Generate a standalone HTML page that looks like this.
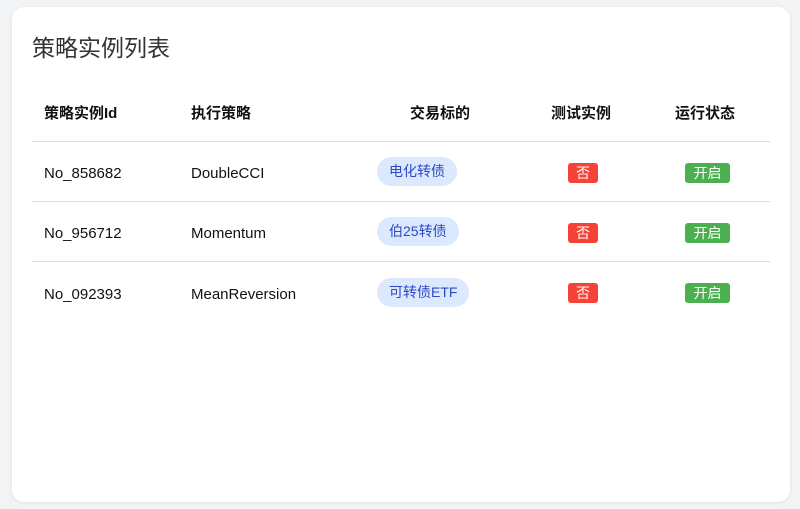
<html><head><style>
body{margin:0;width:800px;height:509px;background:#f2f3f5;font-family:"Liberation Sans","Noto Sans CJK SC",sans-serif;position:relative;overflow:hidden}
.card{position:absolute;left:12px;top:7px;width:778px;height:495px;background:#fff;border-radius:12px;box-shadow:0 1px 4px rgba(0,0,0,0.08)}
.t{position:absolute;white-space:nowrap}
.title{left:32px;top:29px;font-size:23px;color:#333}
.h{font-size:15px;font-weight:bold;color:#111;top:102px}
.line{position:absolute;left:32px;width:738px;height:1px;background:#ddd}
.c{font-size:15px;color:#111}
.pill{position:absolute;left:377px;height:29px;line-height:29px;padding:0 12px;border-radius:15px;background:#dce8fd;color:#2c48c2;font-size:14px}
.no{position:absolute;left:568px;width:30px;height:20px;line-height:20px;text-align:center;background:#f44336;color:#fff;border-radius:3px;font-size:14px}
.on{position:absolute;left:685px;width:45px;height:20px;line-height:20px;text-align:center;background:#4caf50;color:#fff;border-radius:3px;font-size:14px}
</style></head><body>
<div class="card"></div>
<div class="t title">策略实例列表</div>
<div class="t h" style="left:44px">策略实例Id</div>
<div class="t h" style="left:191px">执行策略</div>
<div class="t h" style="left:410px">交易标的</div>
<div class="t h" style="left:551px">测试实例</div>
<div class="t h" style="left:675px">运行状态</div>
<div class="line" style="top:141px"></div>
<div class="line" style="top:201px"></div>
<div class="line" style="top:261px"></div>
<div class="t c" style="left:44px;top:165px">No_858682</div>
<div class="t c" style="left:191px;top:165px">DoubleCCI</div>
<div class="pill" style="top:157px">电化转债</div>
<div class="no" style="top:163px">否</div>
<div class="on" style="top:163px">开启</div>
<div class="t c" style="left:44px;top:225px">No_956712</div>
<div class="t c" style="left:191px;top:225px">Momentum</div>
<div class="pill" style="top:217px">伯25转债</div>
<div class="no" style="top:223px">否</div>
<div class="on" style="top:223px">开启</div>
<div class="t c" style="left:44px;top:286px">No_092393</div>
<div class="t c" style="left:191px;top:286px">MeanReversion</div>
<div class="pill" style="top:278px">可转债ETF</div>
<div class="no" style="top:283px">否</div>
<div class="on" style="top:283px">开启</div>
</body></html>
